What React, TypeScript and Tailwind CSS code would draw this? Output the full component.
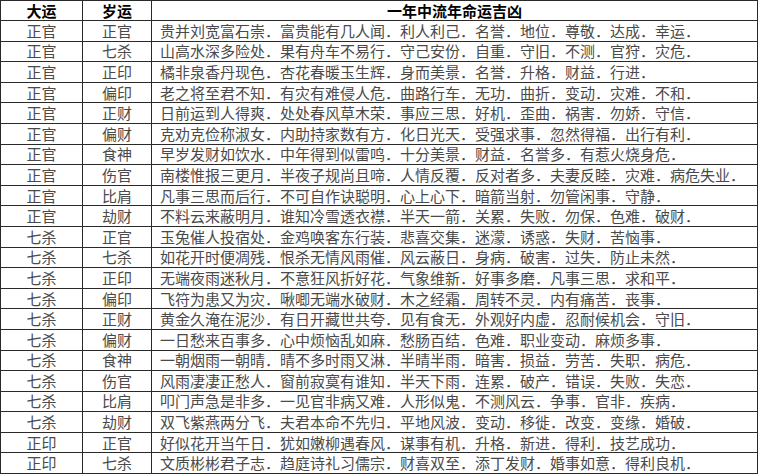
const rows: [string, string, string][] = [
  ["正官", "正官", "贵并刘宽富石崇．富贵能有几人闻．利人利己．名誉．地位．尊敬．达成．幸运．"],
  ["正官", "七杀", "山高水深多险处．果有舟车不易行．守己安份．自重．守旧．不测．官狩．灾危．"],
  ["正官", "正印", "橘非泉香丹现色．杏花春暖玉生辉．身而美景．名誉．升格．财益．行进．"],
  ["正官", "偏印", "老之将至君不知．有灾有难侵人危．曲路行车．无功．曲折．变动．灾难．不和．"],
  ["正官", "正财", "日前运到人得爽．处处春风草木荣．事应三思．好机．歪曲．祸害．勿娇．守信．"],
  ["正官", "偏财", "克劝克俭称淑女．内助持家数有方．化日光天．受强求事．忽然得福．出行有利．"],
  ["正官", "食神", "早岁发财如饮水．中年得到似雷鸣．十分美景．财益．名誉多．有惹火烧身危．"],
  ["正官", "伤官", "南楼惟报三更月．半夜子规尚且啼．人情反覆．反对者多．夫妻反睦．灾难．病危失业．"],
  ["正官", "比肩", "凡事三思而后行．不可自作诀聪明．心上心下．暗箭当射．勿管闲事．守静．"],
  ["正官", "劫财", "不料云来蔽明月．谁知冷雪透衣襟．半天一箭．关累．失败．勿保．色难．破财．"],
  ["七杀", "正官", "玉兔催人投宿处．金鸡唤客东行装．悲喜交集．迷濛．诱惑．失财．苦恼事．"],
  ["七杀", "七杀", "如花开时便凋残．恨杀无情风雨催．风云蔽日．身病．破害．过失．防止未然．"],
  ["七杀", "正印", "无端夜雨迷秋月．不意狂风折好花．气象维新．好事多磨．凡事三思．求和平．"],
  ["七杀", "偏印", "飞符为患又为灾．啾唧无端水破财．木之经霜．周转不灵．内有痛苦．丧事．"],
  ["七杀", "正财", "黄金久淹在泥沙．有日开藏世共夸．见有食无．外观好内虚．忍耐候机会．守旧．"],
  ["七杀", "偏财", "一日愁来百事多．心中烦恼乱如麻．愁肠百结．色难．职业变动．麻烦多事．"],
  ["七杀", "食神", "一朝烟雨一朝晴．晴不多时雨又淋．半晴半雨．暗害．损益．劳苦．失职．病危．"],
  ["七杀", "伤官", "风雨凄凄正愁人．窗前寂寞有谁知．半天下雨．连累．破产．错误．失败．失恋．"],
  ["七杀", "比肩", "叩门声急是非多．一见官非病又难．人形似鬼．不测风云．争事．官非．疾病．"],
  ["七杀", "劫财", "双飞紫燕两分飞．夫君本命不先归．平地风波．变动．移徙．改变．变缘．婚破．"],
  ["正印", "正官", "好似花开当午日．犹如嫩柳遇春风．谋事有机．升格．新进．得利．技艺成功．"],
  ["正印", "七杀", "文质彬彬君子志．趋庭诗礼习儒宗．财喜双至．添丁发财．婚事如意．得利良机．"],
];

export default function App() {
  return (
    <div className="w-[760px] h-[475px] bg-white overflow-hidden font-['Noto_Sans_CJK_SC',sans-serif]">
      <table className="table-fixed border-collapse w-[758px] text-[15px] leading-[18px]">
        <colgroup>
          <col className="w-[82px]" />
          <col className="w-[69px]" />
          <col />
        </colgroup>
        <thead>
          <tr className="h-[20px]">
            <th className="border border-[#2a2a2a] font-bold text-black text-center p-0">大运</th>
            <th className="border border-[#2a2a2a] font-bold text-black text-center p-0">岁运</th>
            <th className="border border-[#2a2a2a] font-bold text-black text-center p-0">一年中流年命运吉凶</th>
          </tr>
        </thead>
        <tbody>
          {rows.map((r, i) => (
            <tr key={i} className="h-[20.6px]">
              <td className="border border-[#2a2a2a] text-center text-[#4a4a4a] p-0">{r[0]}</td>
              <td className="border border-[#2a2a2a] text-center text-[#4a4a4a] p-0">{r[1]}</td>
              <td className="border border-[#2a2a2a] text-[#4a4a4a] pl-[8px] p-0 whitespace-nowrap overflow-hidden">{r[2]}</td>
            </tr>
          ))}
        </tbody>
      </table>
    </div>
  );
}
